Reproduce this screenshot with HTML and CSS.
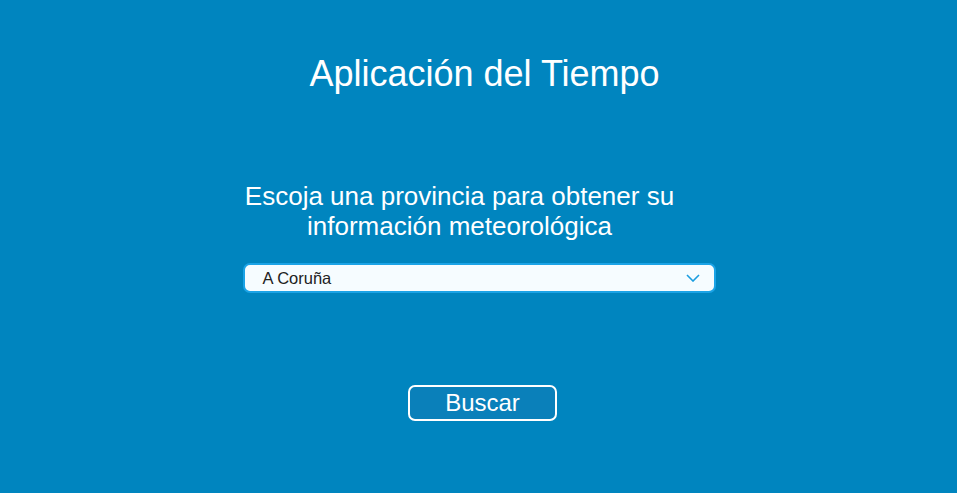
FILE: index.html
```html
<!DOCTYPE html>
<html lang="es">
<head>
<meta charset="utf-8">
<title>Aplicación del Tiempo</title>
<link rel="stylesheet" href="styles.css">
</head>
<body>
<main class="app">
  <h1 class="title">Aplicación del Tiempo</h1>
  <p class="prompt">Escoja una provincia para obtener su<br>información meteorológica</p>
  <div class="select">
    <span class="select-value">A Coruña</span>
    <svg class="chevron" width="14" height="8" viewBox="0 0 14 8"><path d="M1 1 L7 7 L13 1" fill="none" stroke="#1a9de0" stroke-width="1.6"/></svg>
  </div>
  <button class="btn" type="button">Buscar</button>
</main>
</body>
</html>
```
FILE: styles.css
```css
html, body {
  margin: 0;
  padding: 0;
  height: 100%;
  background: #0085bf;
  font-family: "Liberation Sans", Arial, sans-serif;
  color: #ffffff;
}
.app {
  display: flex;
  flex-direction: column;
  align-items: center;
  padding-top: 53px;
}
.title {
  margin: 0 0 0 12px;
  font-size: 36px;
  font-weight: normal;
  line-height: 42px;
}
.prompt {
  margin: 86px 38px 0 0;
  font-size: 26px;
  line-height: 30px;
  text-align: center;
}
.select {
  margin: 22px 0 0 1px;
  height: 26px;
  box-sizing: content-box;
  border: 2px solid #1ba3e6;
  border-radius: 7px;
  background: #f6fcff;
  display: flex;
  align-items: center;
  justify-content: space-between;
  padding: 0 14px 0 18px;
  width: 437px;
}
.select-value {
  color: #222222;
  font-size: 16.5px;
}
.chevron {
  display: block;
}
.btn {
  margin: 92px 0 0 8px;
  width: 149px;
  height: 36px;
  border: 2px solid #ffffff;
  border-radius: 7px;
  background: #0a80ba;
  color: #ffffff;
  font-family: "Liberation Sans", Arial, sans-serif;
  font-size: 24px;
  padding: 0;
  line-height: 32px;
}
```
